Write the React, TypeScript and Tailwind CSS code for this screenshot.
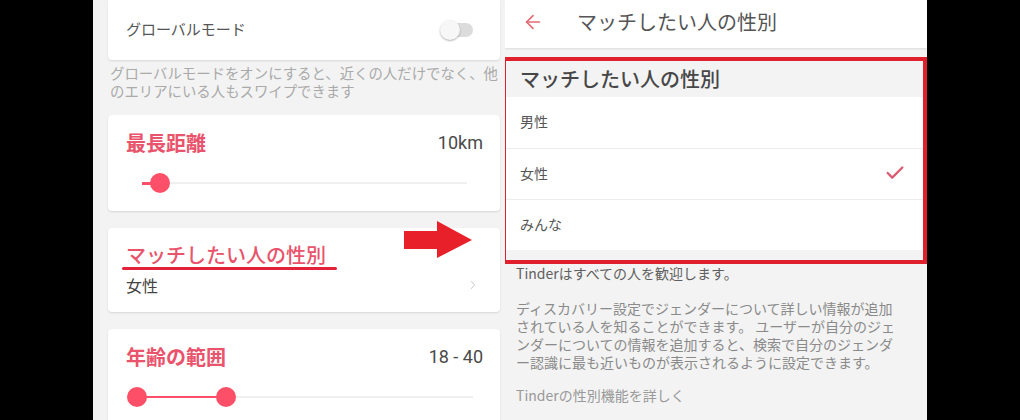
import { ArrowLeft, Check, ChevronRight } from "lucide-react";

const jp = { fontFamily: '"Noto Sans CJK JP", "Noto Sans", sans-serif' };

function Card({ children, className = "" }: { children: React.ReactNode; className?: string }) {
  return (
    <div className={`bg-white rounded-[4px] shadow-[0_1px_2px_rgba(0,0,0,0.12)] ${className}`}>
      {children}
    </div>
  );
}

function LeftScreen() {
  return (
    <div className="relative w-[412px] h-full bg-[#f3f3f3] pl-[15px] pr-[5px]">
      {/* Global mode */}
      <Card className="h-[60px] rounded-t-none flex items-center justify-between pl-[18px] pr-[27px]">
        <span className="-mt-[2px] text-[15px] leading-[20px] text-[#555]">グローバルモード</span>
        <div className="relative w-[32px] h-[14px] rounded-full bg-[#dcdcdc]">
          <div className="absolute -left-[1px] -top-[3px] w-[20px] h-[20px] rounded-full bg-[#f7f7f7] shadow-[0_1px_2px_rgba(0,0,0,0.3)]" />
        </div>
      </Card>
      <p className="mt-[4px] pl-[2px] text-[14.4px] leading-[18px] text-[#aaa] whitespace-nowrap">
        グローバルモードをオンにすると、近くの人だけでなく、他
        <br />
        のエリアにいる人もスワイプできます
      </p>

      {/* Max distance */}
      <Card className="mt-[15px] h-[96px] pt-[16px] pl-[18px] pr-[17px]">
        <div className="flex items-center justify-between">
          <span className="text-[20px] leading-[24px] font-bold text-[#e9536b]">最長距離</span>
          <span className="text-[18px] leading-[24px] text-[#4a4a4a]" style={{ fontFamily: "Roboto, sans-serif" }}>
            10km
          </span>
        </div>
        <div className="relative mt-[18px] ml-[16px] mr-[16px] h-[20px] flex items-center">
          <div className="w-full h-[2px] bg-[#efefef]" />
          <div className="absolute left-0 w-[12px] h-[3px] bg-[#fd5068]" />
          <div className="absolute left-[8px] w-[20px] h-[20px] rounded-full bg-[#fd5068]" />
        </div>
      </Card>

      {/* Gender */}
      <Card className="mt-[17px] h-[84px] pt-[15px] pl-[18px] pr-[20px]">
        <div className="text-[20px] leading-[24px] font-medium text-[#e9536b]">マッチしたい人の性別</div>
        <div className="mt-0 -ml-[4px] w-[215px] h-[3px] rounded-full bg-[#e3213a]" />
        <div className="mt-[4px] flex items-center justify-between">
          <span className="text-[16px] leading-[22px] text-[#444]">女性</span>
          <ChevronRight size={14} strokeWidth={1.5} className="text-[#bbb]" />
        </div>
      </Card>

      {/* Age range */}
      <Card className="mt-[17px] h-[110px] rounded-b-none pt-[16px] pl-[18px] pr-[17px]">
        <div className="flex items-center justify-between">
          <span className="text-[20px] leading-[24px] font-bold text-[#e9536b]">年齢の範囲</span>
          <span className="text-[18px] leading-[24px] text-[#4a4a4a]" style={{ fontFamily: "Roboto, sans-serif" }}>
            18 - 40
          </span>
        </div>
        <div className="relative mt-[18px] ml-[1px] mr-[10px] h-[20px] flex items-center">
          <div className="w-full h-[2px] bg-[#efefef]" />
          <div className="absolute left-[10px] w-[90px] h-[2px] bg-[#fd5068]" />
          <div className="absolute left-0 w-[20px] h-[20px] rounded-full bg-[#fd5068]" />
          <div className="absolute left-[89px] w-[20px] h-[20px] rounded-full bg-[#fd5068]" />
        </div>
      </Card>

      {/* Annotation arrow */}
      <svg className="absolute left-[311px] top-[221px]" width="69" height="38" viewBox="0 0 69 38">
        <polygon points="0,10 33,10 33,0 68,19 33,37 33,28 0,28" fill="#e8202a" />
      </svg>
    </div>
  );
}

function RightScreen() {
  const rows = ["男性", "女性", "みんな"];
  return (
    <div className="w-[422px] h-full bg-[#f3f3f3]">
      <div className="h-[48px] bg-white shadow-[0_1px_2px_rgba(0,0,0,0.1)] flex items-center pl-[17px]">
        <ArrowLeft size={22} strokeWidth={1.8} className="text-[#e56a75] -mt-[4px]" />
        <span className="ml-[33px] -mt-[4px] text-[20px] leading-[26px] text-[#555]">マッチしたい人の性別</span>
      </div>
      <div className="mt-[9px] -ml-[3px] border-[4px] border-[#e0202c]">
        <div className="h-[36px] flex items-center pl-[14px]">
          <span className="-mt-[1px] text-[20px] leading-[26px] font-medium text-[#474747]">マッチしたい人の性別</span>
        </div>
        <div className="bg-white">
          {rows.map((r, i) => (
            <div
              key={r}
              className={`h-[51px] flex items-center justify-between pl-[14px] pr-[17px] pb-[3px] ${i > 0 ? "border-t border-[#ececec]" : ""}`}
            >
              <span className="text-[14px] leading-[20px] text-[#555]">{r}</span>
              {r === "女性" && <Check size={22} strokeWidth={2.5} className="text-[#dc5a70]" />}
            </div>
          ))}
        </div>
        <div className="h-[10px]" />
      </div>
      <div className="pl-[11px] whitespace-nowrap">
        <p className="text-[14px] leading-[18px] text-[#5f5f5f]">Tinderはすべての人を歓迎します。</p>
        <p className="mt-[17px] text-[14px] leading-[18px] text-[#8a8a8a]">
          ディスカバリー設定でジェンダーについて詳しい情報が追加
          <br />
          されている人を知ることができます。 ユーザーが自分のジェ
          <br />
          ンダーについての情報を追加すると、検索で自分のジェンダ
          <br />
          ー認識に最も近いものが表示されるように設定できます。
        </p>
        <p className="mt-[15px] text-[14px] leading-[18px] text-[#999]">Tinderの性別機能を詳しく</p>
      </div>
    </div>
  );
}

export default function App() {
  return (
    <div className="flex w-[1020px] h-[420px] bg-black overflow-hidden" style={jp}>
      <div className="w-[93px] shrink-0" />
      <LeftScreen />
      <RightScreen />
      <div className="flex-1" />
    </div>
  );
}
